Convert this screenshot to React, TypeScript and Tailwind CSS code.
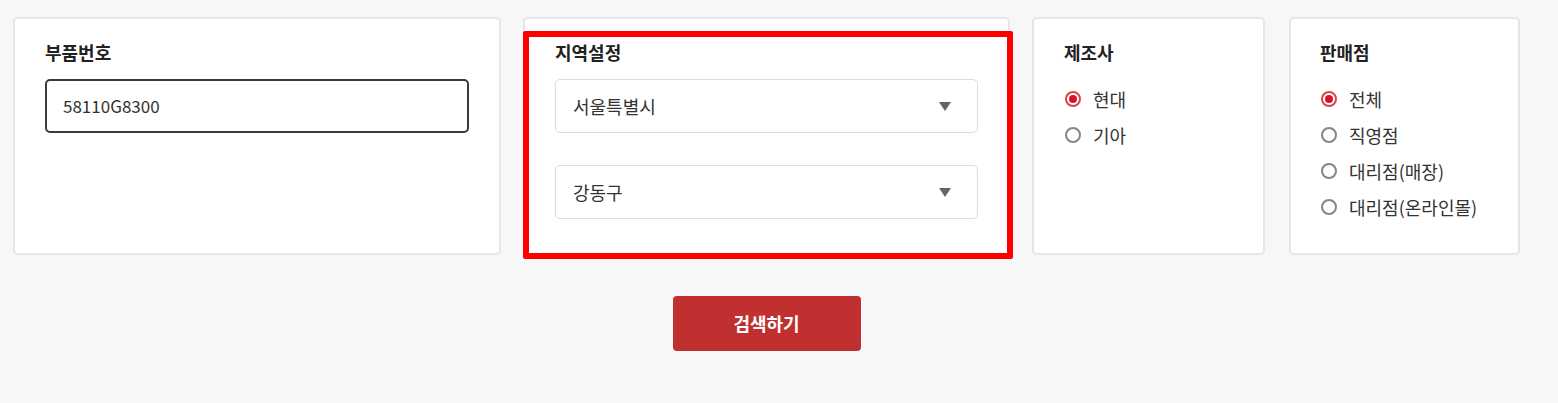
import React from "react";

const FONT = { fontFamily: '"Noto Sans CJK KR", "Noto Sans", sans-serif' };

function Radio({ label, checked }: { label: string; checked?: boolean }) {
  return (
    <div className="flex h-[24px] items-center">
      <span
        className={
          "ml-[1px] flex h-[16px] w-[16px] shrink-0 items-center justify-center rounded-full border-2 bg-white " +
          (checked ? "border-[#d9434a]" : "border-[#858585]")
        }
      >
        {checked && <span className="h-[8px] w-[8px] rounded-full bg-[#d4142a]" />}
      </span>
      <span className="ml-[12px] text-[18px] leading-[24px] text-[#333]">{label}</span>
    </div>
  );
}

function Select({ value }: { value: string }) {
  return (
    <div className="flex h-[54px] w-full items-center justify-between rounded-[5px] border border-[#dcdcdc] bg-white pl-[17px] pr-[26px]">
      <span className="text-[18px] text-[#333]">{value}</span>
      <svg width="12" height="9" viewBox="0 0 12 9">
        <polygon points="0,0 12,0 6,9" fill="#666" />
      </svg>
    </div>
  );
}

function Label({ children }: { children: React.ReactNode }) {
  return <div className="text-[18px] font-bold leading-[22px] text-[#222]">{children}</div>;
}

export default function App() {
  return (
    <div className="min-h-[403px] w-[1558px] bg-[#f7f7f7] pl-[13px] pt-[17px]" style={FONT}>
      <div className="flex w-[1507px] flex-col">
        <div className="flex gap-[22px]">
          <div className="h-[238px] w-[488px] rounded-[5px] border-2 border-[#e6e6e6] bg-white pl-[30px] pr-[30px] pt-[22px]">
            <Label>부품번호</Label>
            <div className="mt-[16px] flex h-[54px] w-full items-center rounded-[5px] border-2 border-[#3a3a3a] bg-white pl-[16px]">
              <span className="text-[17px] text-[#333]">58110G8300</span>
            </div>
          </div>
          <div className="relative h-[238px] w-[487px] rounded-[5px] border-2 border-[#e6e6e6] bg-white pl-[30px] pr-[30px] pt-[22px]">
            <Label>지역설정</Label>
            <div className="mt-[16px] flex flex-col gap-[32px]">
              <Select value="서울특별시" />
              <Select value="강동구" />
            </div>
            <div className="pointer-events-none absolute -left-[2px] -right-[5px] top-[12px] -bottom-[6px] rounded-[2px] border-[6px] border-[#ff0000]" />
          </div>
          <div className="h-[238px] w-[233px] rounded-[5px] border-2 border-[#e6e6e6] bg-white pl-[30px] pt-[22px]">
            <Label>제조사</Label>
            <div className="mt-[24px] flex flex-col gap-[12px]">
              <Radio label="현대" checked />
              <Radio label="기아" />
            </div>
          </div>
          <div className="ml-[2px] h-[238px] w-[231px] rounded-[5px] border-2 border-[#e6e6e6] bg-white pl-[29px] pt-[22px]">
            <Label>판매점</Label>
            <div className="mt-[24px] flex flex-col gap-[12px]">
              <Radio label="전체" checked />
              <Radio label="직영점" />
              <Radio label="대리점(매장)" />
              <Radio label="대리점(온라인몰)" />
            </div>
          </div>
        </div>
        <button className="mx-auto mt-[41px] flex h-[55px] w-[188px] items-center justify-center rounded-[4px] bg-[#c13030] text-[18px] font-bold text-white">
          검색하기
        </button>
      </div>
    </div>
  );
}
